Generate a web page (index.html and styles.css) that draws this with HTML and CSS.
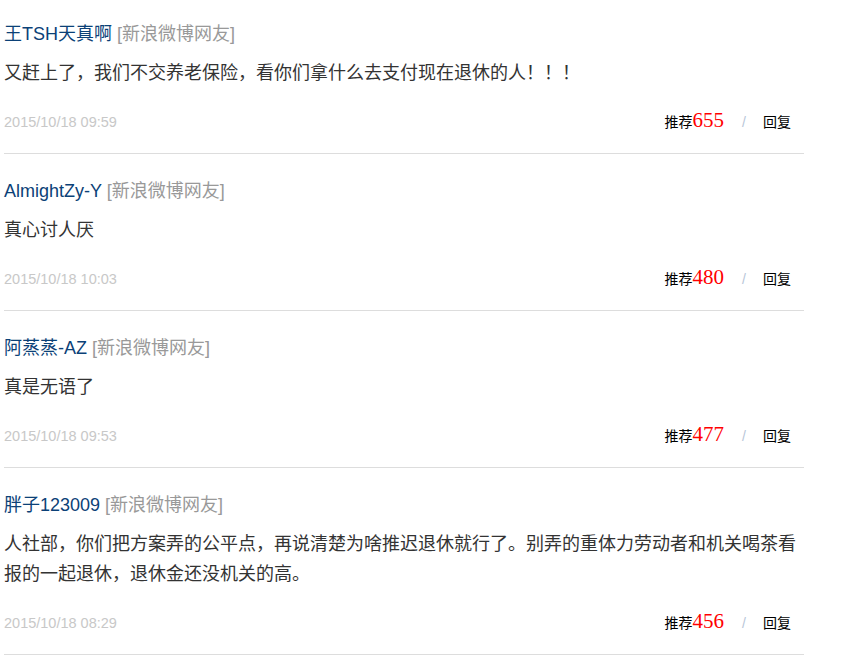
FILE: index.html
```html
<!DOCTYPE html>
<html lang="zh-CN">
<head>
<meta charset="utf-8">
<title>评论</title>
<link rel="stylesheet" href="styles.css">
</head>
<body>
<div class="comments">
  <div class="comment">
    <div class="name"><a class="user">王TSH天真啊</a> <span class="src">[新浪微博网友]</span></div>
    <div class="text">又赶上了，我们不交养老保险，看你们拿什么去支付现在退休的人！！！</div>
    <div class="meta">
      <span class="date">2015/10/18 09:59</span>
      <span class="actions"><span class="rec">推荐<em class="num">655</em></span><span class="sep">/</span><span class="reply">回复</span></span>
    </div>
  </div>
  <div class="comment">
    <div class="name"><a class="user">AlmightZy-Y</a> <span class="src">[新浪微博网友]</span></div>
    <div class="text">真心讨人厌</div>
    <div class="meta">
      <span class="date">2015/10/18 10:03</span>
      <span class="actions"><span class="rec">推荐<em class="num">480</em></span><span class="sep">/</span><span class="reply">回复</span></span>
    </div>
  </div>
  <div class="comment">
    <div class="name"><a class="user">阿蒸蒸-AZ</a> <span class="src">[新浪微博网友]</span></div>
    <div class="text">真是无语了</div>
    <div class="meta">
      <span class="date">2015/10/18 09:53</span>
      <span class="actions"><span class="rec">推荐<em class="num">477</em></span><span class="sep">/</span><span class="reply">回复</span></span>
    </div>
  </div>
  <div class="comment">
    <div class="name"><a class="user">胖子123009</a> <span class="src">[新浪微博网友]</span></div>
    <div class="text">人社部，你们把方案弄的公平点，再说清楚为啥推迟退休就行了。别弄的重体力劳动者和机关喝茶看报的一起退休，退休金还没机关的高。</div>
    <div class="meta">
      <span class="date">2015/10/18 08:29</span>
      <span class="actions"><span class="rec">推荐<em class="num">456</em></span><span class="sep">/</span><span class="reply">回复</span></span>
    </div>
  </div>
</div>
</body>
</html>
```

FILE: styles.css
```css
html, body {
  margin: 0;
  padding: 0;
  background: #fff;
}
body {
  font-family: "Liberation Sans", "Noto Sans CJK SC", Arial, sans-serif;
  color: #333;
}
.comments {
  width: 800px;
  margin-left: 4px;
}
.comment {
  padding: 25px 0 19px;
  border-bottom: 1px solid #dddddd;
}
.comment:first-child {
  padding-top: 22px;
}
.name {
  font-size: 18px;
  line-height: 24px;
  white-space: nowrap;
}
.user {
  color: #0b4177;
  text-decoration: none;
}
.src {
  color: #999;
}
.text {
  margin-top: 12px;
  font-size: 18px;
  line-height: 30px;
  color: #333;
}
.meta {
  margin-top: 22px;
  height: 24px;
  display: flex;
  justify-content: space-between;
  align-items: center;
  line-height: 24px;
}
.date {
  font-size: 14.5px;
  color: #c8c8c8;
}
.actions {
  display: flex;
  align-items: baseline;
  height: 24px;
  padding-right: 13px;
  font-size: 14px;
  line-height: 24px;
  color: #000;
}
.num {
  font-style: normal;
  font-family: "Liberation Serif", "DejaVu Serif", serif;
  font-size: 21px;
  line-height: 1;
  color: #f00;
}
.sep {
  margin: 0 17px 0 18px;
  color: #b8c6d8;
  font-size: 14px;
}
.reply {
  color: #000;
}
```
